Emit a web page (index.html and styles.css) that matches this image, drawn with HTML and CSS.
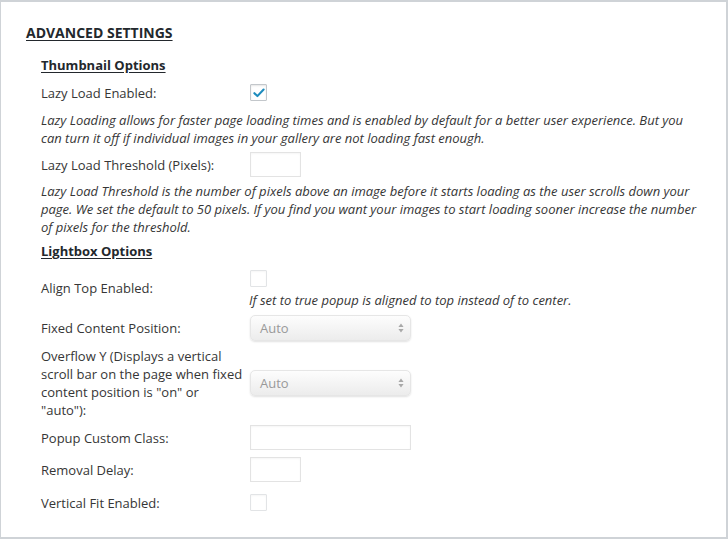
FILE: index.html
```
<!DOCTYPE html>
<html>
<head>
<meta charset="utf-8">
<link rel="stylesheet" href="styles.css">
</head>
<body>
<div class="panel">
  <h2 class="title">ADVANCED SETTINGS</h2>
  <div class="section">
    <h3 class="sub sub-first">Thumbnail Options</h3>
    <div class="row">
      <div class="label">Lazy Load Enabled:</div>
      <div class="ctrl"><span class="cb checked"><svg width="12" height="10" viewBox="0 0 12 10"><path d="M1.4 5.2 L4.4 8.1 L10.6 1.5" fill="none" stroke="#1e8cbe" stroke-width="2.1" stroke-linecap="round" stroke-linejoin="round"/></svg></span></div>
    </div>
    <p class="desc">Lazy Loading allows for faster page loading times and is enabled by default for a better user experience. But you can turn it off if individual images in your gallery are not loading fast enough.</p>
    <div class="row row-tight">
      <div class="label">Lazy Load Threshold (Pixels):</div>
      <div class="ctrl"><span class="input small"></span></div>
    </div>
    <p class="desc desc-tight">Lazy Load Threshold is the number of pixels above an image before it starts loading as the user scrolls down your page. We set the default to 50 pixels. If you find you want your images to start loading sooner increase the number of pixels for the threshold.</p>
    <h3 class="sub">Lightbox Options</h3>
    <div class="row row-align">
      <div class="label">Align Top Enabled:</div>
      <div class="ctrl ctrl-stack"><span class="cb"></span><span class="desc inline">If set to true popup is aligned to top instead of to center.</span></div>
    </div>
    <div class="row">
      <div class="label">Fixed Content Position:</div>
      <div class="ctrl"><span class="select"><span class="sel-text">Auto</span><svg class="arrows" width="6" height="10" viewBox="0 0 6 10"><path d="M3 0.5 L5.6 4 L0.4 4 Z M3 9.5 L5.6 6 L0.4 6 Z" fill="#a9a9a9"/></svg></span></div>
    </div>
    <div class="row">
      <div class="label">Overflow Y (Displays a vertical scroll bar on the page when fixed content position is "on" or "auto"):</div>
      <div class="ctrl"><span class="select"><span class="sel-text">Auto</span><svg class="arrows" width="6" height="10" viewBox="0 0 6 10"><path d="M3 0.5 L5.6 4 L0.4 4 Z M3 9.5 L5.6 6 L0.4 6 Z" fill="#a9a9a9"/></svg></span></div>
    </div>
    <div class="row">
      <div class="label">Popup Custom Class:</div>
      <div class="ctrl"><span class="input wide"></span></div>
    </div>
    <div class="row row-removal">
      <div class="label">Removal Delay:</div>
      <div class="ctrl"><span class="input small"></span></div>
    </div>
    <div class="row row-last">
      <div class="label">Vertical Fit Enabled:</div>
      <div class="ctrl"><span class="cb"></span></div>
    </div>
  </div>
</div>
</body>
</html>
```
FILE: styles.css
```
html, body {
  margin: 0;
  padding: 0;
  background: #fff;
}
body {
  font-family: "Open Sans", "Liberation Sans", sans-serif;
  font-size: 13px;
  color: #363636;
}
.panel {
  box-sizing: border-box;
  width: 728px;
  height: 539px;
  border: 1px solid #cfd3d7;
  border-width: 2px 2px 2px 1px;
  padding: 21px 26px 0 25px;
}
.title {
  margin: 0;
  font-size: 14px;
  line-height: 20px;
  font-weight: 700;
  color: #23282d;
  text-decoration: underline;
  text-underline-offset: 2px;
}
.section {
  padding-left: 15px;
}
.sub {
  margin: 6px 0 0 0;
  font-size: 13px;
  line-height: 18px;
  font-weight: 700;
  color: #23282d;
  text-decoration: underline;
  text-underline-offset: 2px;
}
.sub-first {
  margin-top: 13px;
}
.row {
  display: flex;
  align-items: center;
  min-height: 25px;
  margin-top: 6px;
}
.row-tight {
  margin-top: 5px;
}
.row-removal {
  margin-top: 7px;
}
.row-last {
  margin-top: 8px;
}
.label {
  box-sizing: border-box;
  width: 208px;
  padding-right: 5px;
  flex: none;
  line-height: 18px;
}
.ctrl {
  display: flex;
  align-items: center;
}
.ctrl-stack {
  flex-direction: column;
  align-items: flex-start;
}
.cb {
  box-sizing: border-box;
  display: flex;
  align-items: center;
  justify-content: center;
  width: 17px;
  height: 17px;
  margin: 4px 0 4px 1px;
  border: 1px solid #e2e4e6;
  border-radius: 1px;
  background: #fff;
  box-shadow: inset 0 1px 2px rgba(0,0,0,.04);
}
.cb.checked {
  border-color: #c3c7cb;
  box-shadow: inset 0 1px 2px rgba(0,0,0,.1);
}
.desc {
  margin: 6px 0 0 0;
  font-style: italic;
  line-height: 18px;
  color: #363636;
}
.desc-tight {
  margin-top: 5px;
}
.desc.inline {
  margin: 0;
}
.input {
  box-sizing: border-box;
  display: block;
  height: 25px;
  margin-left: 1px;
  border: 1px solid #e3e3e3;
  background: #fff;
  box-shadow: inset 0 1px 2px rgba(0,0,0,.04);
}
.input.small { width: 51px; }
.input.wide { width: 161px; }
.select {
  box-sizing: border-box;
  display: flex;
  align-items: center;
  justify-content: space-between;
  width: 161px;
  height: 26px;
  margin-left: 1px;
  padding: 0 6px 0 9px;
  border: 1px solid #e6e6e6;
  border-radius: 5px;
  background: linear-gradient(#fdfdfd, #ececec);
  box-shadow: 0 1px 2px rgba(0,0,0,.12);
  color: #999;
}
.sel-text {
  line-height: 18px;
}
.arrows {
  display: block;
}
```
